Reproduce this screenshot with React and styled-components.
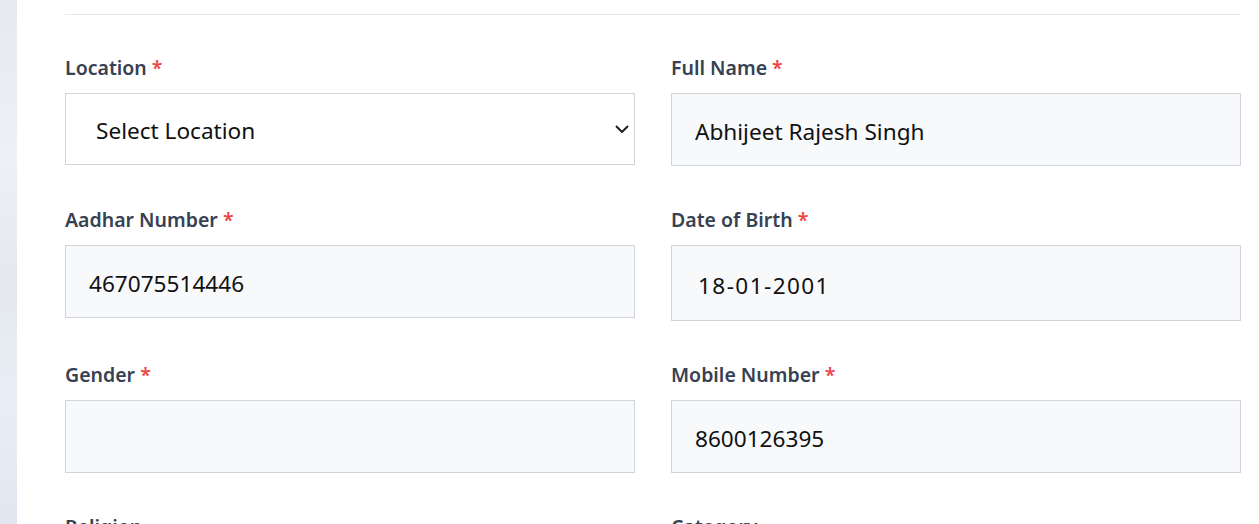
import React from 'react';
import styled, { createGlobalStyle } from 'styled-components';

const GlobalStyle = createGlobalStyle`
  html, body {
    margin: 0;
    padding: 0;
    background: #ffffff;
  }
  body {
    font-family: "Noto Sans", "Open Sans", sans-serif;
  }
`;

const Page = styled.div`
  display: flex;
  width: 1259px;
  height: 524px;
  overflow: hidden;
`;

const SideStrip = styled.div`
  width: 17px;
  flex-shrink: 0;
  background: linear-gradient(180deg, #e6e9ee 0%, #edf1f7 30%, #e4e8ee 55%, #e9eef6 75%, #e1e7f0 100%);
`;

const Panel = styled.div`
  flex: 1;
  background: #ffffff;
  padding: 0 19px 0 48px;
`;

const Divider = styled.div`
  margin-top: 14px;
  height: 1px;
  background: #e5e7eb;
`;

const FormGrid = styled.div`
  display: grid;
  grid-template-columns: 570px 570px;
  column-gap: 36px;
  row-gap: 42px;
  margin-top: 41px;
`;

const Field = styled.div`
  display: flex;
  flex-direction: column;
`;

const Label = styled.label`
  font-size: 19.5px;
  line-height: 24px;
  font-weight: 600;
  color: #374151;
  margin-bottom: 13px;
`;

const Star = styled.span`
  color: #ef4444;
`;

const Input = styled.input`
  box-sizing: border-box;
  width: 100%;
  height: ${(p) => p.$h || 73}px;
  padding: 4px ${(p) => p.$pad || 23}px 0;
  border: 1px solid #d1d5db;
  border-radius: 0;
  background: #f8f9fb;
  font-family: inherit;
  font-size: 22.6px;
  letter-spacing: ${(p) => p.$spacing || 0}px;
  color: #111111;
  outline: none;
`;

const SelectWrap = styled.div`
  position: relative;
  width: 100%;
`;

const Select = styled.select`
  box-sizing: border-box;
  width: 100%;
  height: 72px;
  padding: 2px 40px 0 30px;
  border: 1px solid #d1d5db;
  border-radius: 0;
  background: #ffffff;
  appearance: none;
  font-family: inherit;
  font-size: 22.6px;
  color: #111111;
  outline: none;
`;

const Chevron = styled.svg`
  position: absolute;
  right: 6px;
  top: 32px;
  width: 14px;
  height: 8px;
  pointer-events: none;
`;

function ReqLabel({ children }) {
  return (
    <Label>
      {children}
      <Star> *</Star>
    </Label>
  );
}

export default function App() {
  return (
    <>
      <GlobalStyle />
      <Page>
        <SideStrip />
        <Panel>
          <Divider />
          <FormGrid>
            <Field>
              <ReqLabel>Location</ReqLabel>
              <SelectWrap>
                <Select defaultValue="">
                  <option value="">Select Location</option>
                </Select>
                <Chevron viewBox="0 0 14 8">
                  <path d="M1 1 L7 7 L13 1" fill="none" stroke="#1f1f1f" strokeWidth="2" />
                </Chevron>
              </SelectWrap>
            </Field>
            <Field>
              <ReqLabel>Full Name</ReqLabel>
              <Input defaultValue="Abhijeet Rajesh Singh" />
            </Field>
            <Field>
              <ReqLabel>Aadhar Number</ReqLabel>
              <Input defaultValue="467075514446" />
            </Field>
            <Field>
              <ReqLabel>Date of Birth</ReqLabel>
              <Input $h={76} $pad={26} $spacing={1.4} defaultValue="18-01-2001" />
            </Field>
            <Field>
              <ReqLabel>Gender</ReqLabel>
              <Input defaultValue="" />
            </Field>
            <Field>
              <ReqLabel>Mobile Number</ReqLabel>
              <Input defaultValue="8600126395" />
            </Field>
            <Field>
              <Label>Religion</Label>
            </Field>
            <Field>
              <Label>Category</Label>
            </Field>
          </FormGrid>
        </Panel>
      </Page>
    </>
  );
}
